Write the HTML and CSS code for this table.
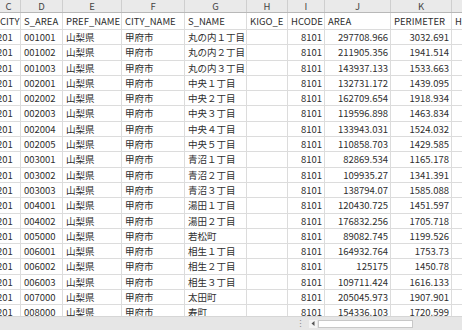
FILE: index.html
```html
<!DOCTYPE html>
<html lang="ja">
<head>
<meta charset="utf-8">
<title>Sheet</title>
<link rel="stylesheet" href="styles.css">
</head>
<body>
<div class="sheet">
  <div class="grid">
    <div class="row hdr"><div>C</div><div>D</div><div>E</div><div>F</div><div>G</div><div>H</div><div>I</div><div>J</div><div>K</div><div>L</div></div>
    <div class="row fields"><div>CITY</div><div>S_AREA</div><div>PREF_NAME</div><div>CITY_NAME</div><div>S_NAME</div><div>KIGO_E</div><div>HCODE</div><div>AREA</div><div>PERIMETER</div><div>H27KA19_ID</div></div>
    <div class="row"><div class="c">201</div><div>001001</div><div>山梨県</div><div>甲府市</div><div>丸の内１丁目</div><div></div><div class="n">8101</div><div class="n">297708.966</div><div class="n">3032.691</div><div></div></div>
    <div class="row"><div class="c">201</div><div>001002</div><div>山梨県</div><div>甲府市</div><div>丸の内２丁目</div><div></div><div class="n">8101</div><div class="n">211905.356</div><div class="n">1941.514</div><div></div></div>
    <div class="row"><div class="c">201</div><div>001003</div><div>山梨県</div><div>甲府市</div><div>丸の内３丁目</div><div></div><div class="n">8101</div><div class="n">143937.133</div><div class="n">1533.663</div><div></div></div>
    <div class="row"><div class="c">201</div><div>002001</div><div>山梨県</div><div>甲府市</div><div>中央１丁目</div><div></div><div class="n">8101</div><div class="n">132731.172</div><div class="n">1439.095</div><div></div></div>
    <div class="row"><div class="c">201</div><div>002002</div><div>山梨県</div><div>甲府市</div><div>中央２丁目</div><div></div><div class="n">8101</div><div class="n">162709.654</div><div class="n">1918.934</div><div></div></div>
    <div class="row"><div class="c">201</div><div>002003</div><div>山梨県</div><div>甲府市</div><div>中央３丁目</div><div></div><div class="n">8101</div><div class="n">119596.898</div><div class="n">1463.834</div><div></div></div>
    <div class="row"><div class="c">201</div><div>002004</div><div>山梨県</div><div>甲府市</div><div>中央４丁目</div><div></div><div class="n">8101</div><div class="n">133943.031</div><div class="n">1524.032</div><div></div></div>
    <div class="row"><div class="c">201</div><div>002005</div><div>山梨県</div><div>甲府市</div><div>中央５丁目</div><div></div><div class="n">8101</div><div class="n">110858.703</div><div class="n">1429.585</div><div></div></div>
    <div class="row"><div class="c">201</div><div>003001</div><div>山梨県</div><div>甲府市</div><div>青沼１丁目</div><div></div><div class="n">8101</div><div class="n">82869.534</div><div class="n">1165.178</div><div></div></div>
    <div class="row"><div class="c">201</div><div>003002</div><div>山梨県</div><div>甲府市</div><div>青沼２丁目</div><div></div><div class="n">8101</div><div class="n">109935.27</div><div class="n">1341.391</div><div></div></div>
    <div class="row"><div class="c">201</div><div>003003</div><div>山梨県</div><div>甲府市</div><div>青沼３丁目</div><div></div><div class="n">8101</div><div class="n">138794.07</div><div class="n">1585.088</div><div></div></div>
    <div class="row"><div class="c">201</div><div>004001</div><div>山梨県</div><div>甲府市</div><div>湯田１丁目</div><div></div><div class="n">8101</div><div class="n">120430.725</div><div class="n">1451.597</div><div></div></div>
    <div class="row"><div class="c">201</div><div>004002</div><div>山梨県</div><div>甲府市</div><div>湯田２丁目</div><div></div><div class="n">8101</div><div class="n">176832.256</div><div class="n">1705.718</div><div></div></div>
    <div class="row"><div class="c">201</div><div>005000</div><div>山梨県</div><div>甲府市</div><div>若松町</div><div></div><div class="n">8101</div><div class="n">89082.745</div><div class="n">1199.526</div><div></div></div>
    <div class="row"><div class="c">201</div><div>006001</div><div>山梨県</div><div>甲府市</div><div>相生１丁目</div><div></div><div class="n">8101</div><div class="n">164932.764</div><div class="n">1753.73</div><div></div></div>
    <div class="row"><div class="c">201</div><div>006002</div><div>山梨県</div><div>甲府市</div><div>相生２丁目</div><div></div><div class="n">8101</div><div class="n">125175</div><div class="n">1450.78</div><div></div></div>
    <div class="row"><div class="c">201</div><div>006003</div><div>山梨県</div><div>甲府市</div><div>相生３丁目</div><div></div><div class="n">8101</div><div class="n">109711.424</div><div class="n">1616.133</div><div></div></div>
    <div class="row"><div class="c">201</div><div>007000</div><div>山梨県</div><div>甲府市</div><div>太田町</div><div></div><div class="n">8101</div><div class="n">205045.973</div><div class="n">1907.901</div><div></div></div>
    <div class="row"><div class="c">201</div><div>008000</div><div>山梨県</div><div>甲府市</div><div>寿町</div><div></div><div class="n">8101</div><div class="n">154336.103</div><div class="n">1720.599</div><div></div></div>
  </div>
</div>
<div class="statusbar">
  <div class="tabs"></div>
  <div class="grip">⋮</div>
  <div class="arrow"><svg width="4" height="5" viewBox="0 0 4 5"><path d="M3.5 0 L0.5 2.5 L3.5 5 Z" fill="#555"/></svg></div>
  <div class="thumb"></div>
</div>
</body>
</html>
```
FILE: styles.css
```css
html, body {
  margin: 0;
  padding: 0;
  background: #ffffff;
}
body {
  width: 462px;
  height: 330px;
  overflow: hidden;
  font-family: "Noto Sans CJK JP", "Noto Sans", sans-serif;
  font-size: 9.5px;
  color: #2e2e2e;
}
.sheet {
  height: 316px;
  overflow: hidden;
}
.grid {
  margin-left: -3px;
  width: 560px;
}
.row {
  display: grid;
  grid-template-columns: 24px 42px 59px 63px 62px 41px 37px 66px 61px 80px;
  height: 15.3px;
  box-sizing: border-box;
  border-bottom: 1px solid #dcdcdc;
}
.row > div {
  border-right: 1px solid #dcdcdc;
  padding: 0 0 0 3px;
  line-height: 14.3px;
  white-space: nowrap;
  overflow: hidden;
}
.row > .n {
  text-align: right;
  padding: 0 2px 0 0;
}
.row > .c {
  text-indent: -3px;
}
.hdr {
  height: 13px;
  background: #eaeaea;
  border-bottom: 1px solid #b8b8b8;
  color: #444;
}
.hdr > div {
  text-align: center;
  line-height: 12px;
  border-right-color: #cfcfcf;
  padding: 0;
}
.fields {
  height: 17px;
}
.fields > div {
  line-height: 17px;
}
.statusbar {
  height: 14px;
  background: #e6e6e6;
  border-top: 1px solid #d6d6d6;
  box-sizing: border-box;
  display: flex;
  align-items: center;
}
.tabs {
  flex: 0 0 296px;
}
.grip {
  width: 8px;
  color: #8c8c8c;
  font-size: 9px;
  line-height: 9px;
  text-align: center;
}
.arrow {
  width: 8px;
  height: 8px;
  margin-left: 5px;
  background: #f4f4f4;
  display: flex;
  align-items: center;
  justify-content: center;
}
.thumb {
  width: 95px;
  height: 8px;
  margin-left: 1px;
  background: #ffffff;
  border: 1px solid #c8c8c8;
  box-sizing: border-box;
}
```
